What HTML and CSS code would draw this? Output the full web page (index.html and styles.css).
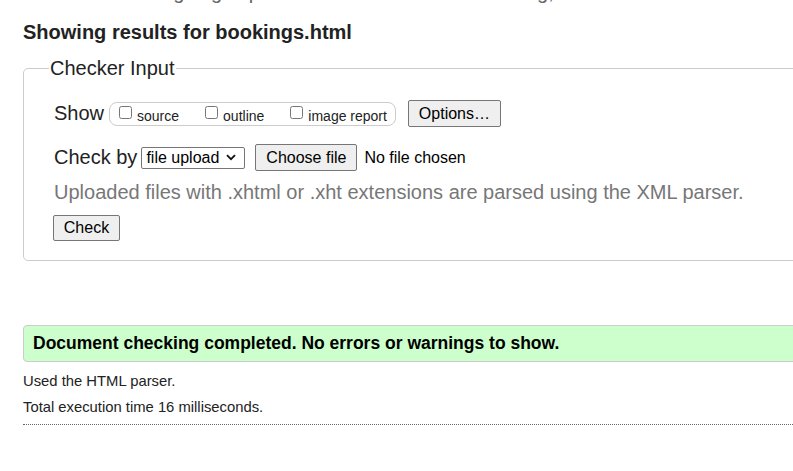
FILE: index.html
```html
<!DOCTYPE html>
<html lang="en">
<head>
<meta charset="utf-8">
<title>Showing results for bookings.html - Nu Html Checker</title>
<link rel="stylesheet" href="styles.css">
</head>
<body>
<div class="page">
  <p class="intro">This tool is an ongoing experiment in better HTML checking, and its behavior remains subject to change</p>
  <h2 class="title">Showing results for bookings.html</h2>
  <form class="checker">
    <fieldset class="input-set">
      <legend class="input-legend">Checker Input</legend>
      <div class="row show-row">
        <span class="row-label">Show</span>
        <span class="show-group">
          <label class="opt"><input type="checkbox" class="cb"><span>source</span></label>
          <label class="opt"><input type="checkbox" class="cb"><span>outline</span></label>
          <label class="opt"><input type="checkbox" class="cb"><span>image report</span></label>
        </span>
        <button type="button" class="btn btn-options">Options…</button>
      </div>
      <div class="row check-row">
        <span class="row-label label-check">Check by</span>
        <span class="fake-select">file upload<svg class="chev" width="10" height="7" viewBox="0 0 10 7"><path d="M1 1.2 L5 5.2 L9 1.2" fill="none" stroke="#111" stroke-width="1.8"/></svg></span>
        <span class="file-input"><button type="button" class="btn btn-file">Choose file</button><span class="file-name">No file chosen</span></span>
      </div>
      <p class="hint">Uploaded files with .xhtml or .xht extensions are parsed using the XML parser.</p>
      <button type="button" class="btn btn-check">Check</button>
    </fieldset>
  </form>
  <div class="success">Document checking completed. No errors or warnings to show.</div>
  <p class="meta">Used the HTML parser.</p>
  <p class="meta">Total execution time 16 milliseconds.</p>
  <hr class="dots">
</div>
</body>
</html>
```
FILE: styles.css
```css
html, body {
  margin: 0;
  padding: 0;
  background: #fff;
  overflow: hidden;
}
body {
  font-family: "Liberation Sans", Arial, sans-serif;
  color: #222;
}
.page {
  width: 880px;
  padding-left: 23px;
}
.intro {
  margin: -19px 0 0 -1px;
  font-size: 20px;
  line-height: 23px;
  color: #666;
  white-space: nowrap;
}
.title {
  margin: 17px 0 0;
  font-size: 20px;
  line-height: 23px;
  font-weight: bold;
  color: #222;
}
.checker {
  margin: 13px 0 0;
}
.input-set {
  margin: 0;
  border: 1px solid #ccc;
  border-radius: 5px;
  padding: 20px 0 19px 30px;
}
.input-legend {
  font-size: 20px;
  line-height: 23px;
  padding: 0 1px;
  margin-left: -5px;
  color: #222;
}
.row {
  display: flex;
  align-items: center;
}
.row-label {
  font-size: 20px;
  line-height: 23px;
  margin-right: 5px;
}
.label-check {
  margin-right: 4px;
}
.show-group {
  display: inline-flex;
  align-items: center;
  gap: 26px;
  border: 1px solid #ccc;
  border-radius: 8px;
  padding: 0 8px 0 9px;
  height: 22px;
  font-size: 14px;
}
.opt {
  display: inline-flex;
  align-items: center;
}
.cb {
  margin: 0 5px 2px 0;
  width: 13px;
  height: 13px;
}
.opt span {
  position: relative;
  top: 2px;
}
.btn {
  font-family: "Liberation Sans", Arial, sans-serif;
  font-size: 16px;
  color: #000;
  background: #efefef;
  border: 1px solid #767676;
  border-radius: 2px;
  height: 27px;
  padding: 0 9px;
}
.btn-options {
  margin-left: 12px;
  width: 93px;
}
.check-row {
  margin-top: 17px;
}
.fake-select {
  display: inline-flex;
  align-items: center;
  height: 22px;
  width: 104px;
  box-sizing: border-box;
  border: 1px solid #767676;
  border-radius: 2px;
  padding: 0 4px 0 4px;
  font-size: 16px;
  color: #000;
  gap: 7px;
}
.chev {
  display: block;
}
.file-input {
  display: inline-flex;
  align-items: center;
  margin-left: 10px;
}
.btn-file {
  width: 102px;
}
.file-name {
  font-size: 16px;
  margin-left: 7px;
  color: #000;
}
.hint {
  margin: 10px 0 0;
  font-size: 20px;
  line-height: 23px;
  color: #777;
}
.btn-check {
  margin-top: 11px;
  margin-left: -1px;
  height: 26px;
  width: 67px;
}
.success {
  margin-top: 64px;
  border: 1px solid #ccc;
  border-radius: 4px;
  background: #cfc;
  height: 37px;
  box-sizing: border-box;
  display: flex;
  align-items: center;
  padding-left: 9px;
  font-size: 17.5px;
  font-weight: bold;
  color: #000;
}
.meta {
  margin: 11px 0 0;
  font-size: 14.8px;
  line-height: 17px;
  color: #222;
}
.meta + .meta {
  margin-top: 9px;
}
.dots {
  margin: 8px 0 0;
  border: 0;
  border-top: 1px dotted #666;
  height: 0;
}
```
